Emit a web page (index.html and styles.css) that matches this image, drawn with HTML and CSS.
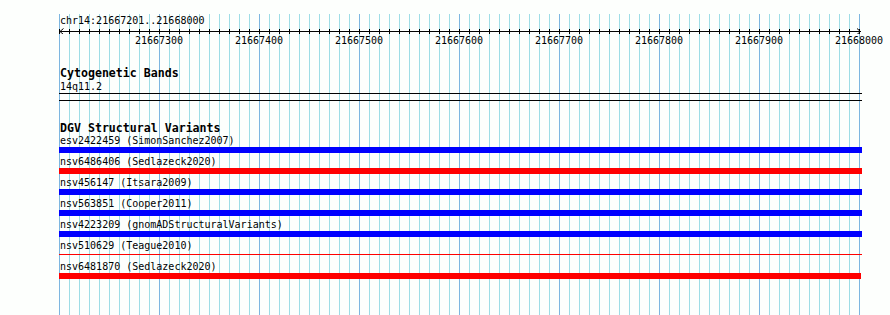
FILE: index.html
```
<!DOCTYPE html>
<html lang="en">
<head>
  <meta charset="UTF-8" />
  <title>chr14:21667201..21668000</title>
  <link rel="stylesheet" href="styles.css">
</head>
<body>
  <div class="panel">
    <div class="pos">chr14:21667201..21668000</div>

    <svg class="ruler" width="803" height="7" viewBox="0 0 803 7">
      <defs>
        <pattern id="tick" width="10" height="7" patternUnits="userSpaceOnUse">
          <rect x="0" y="0" width="1" height="7" fill="#000"/>
        </pattern>
      </defs>
      <rect x="0" y="2" width="801" height="5" fill="url(#tick)"/>
      <rect x="0" y="4" width="802" height="1" fill="#000"/>
      <path d="M4.5 1.5 L1 4.5 L4.5 7.5" fill="none" stroke="#000" stroke-width="1"/>
      <path d="M798 1.5 L801.5 4.5 L798 7.5" fill="none" stroke="#000" stroke-width="1"/>
    </svg>

    <div class="ticks">
      <span>21667300</span>
      <span>21667400</span>
      <span>21667500</span>
      <span>21667600</span>
      <span>21667700</span>
      <span>21667800</span>
      <span>21667900</span>
      <span>21668000</span>
    </div>

    <div class="track track-first">
      <div class="track-title">Cytogenetic Bands</div>
      <div class="label">14q11.2</div>
      <div class="band"></div>
    </div>

    <div class="track">
      <div class="track-title">DGV Structural Variants</div>

      <div class="label">esv2422459 (SimonSanchez2007)</div>
      <div class="bar gain"></div>

      <div class="label">nsv6486406 (Sedlazeck2020)</div>
      <div class="bar loss"></div>

      <div class="label">nsv456147 (Itsara2009)</div>
      <div class="bar gain"></div>

      <div class="label">nsv563851 (Cooper2011)</div>
      <div class="bar gain"></div>

      <div class="label">nsv4223209 (gnomADStructuralVariants)</div>
      <div class="bar gain"></div>

      <div class="label">nsv510629 (Teague2010)</div>
      <div class="bar loss thin"></div>

      <div class="label">nsv6481870 (Sedlazeck2020)</div>
      <div class="bar loss short"></div>
    </div>
  </div>
</body>
</html>
```

FILE: styles.css
```
html, body {
  margin: 0;
  padding: 0;
  overflow: hidden;
}
body {
  font-family: "DejaVu Sans Mono", "Liberation Mono", monospace;
  font-size: 10px;
  color: #000;
  background: #fdfffd;
}
/* grid: content box is 59px..860px, one tile per 10bp / 100bp */
.panel {
  width: 890px;
  height: 315px;
  padding: 14px 30px 0 59px;
  box-sizing: border-box;
  background-color: #fdfffd;
  background-image:
    linear-gradient(90deg, #7db6e0 1px, transparent 1px),
    linear-gradient(90deg, #9edde6 1px, transparent 1px);
  background-size: 100px 100%, 10px 100%;
  background-repeat: repeat-x;
  background-origin: content-box;
  background-clip: content-box;
}
.pos {
  line-height: 13px;
  height: 13px;
  padding-left: 1px;
  white-space: nowrap;
}
.ruler {
  display: block;
}
.ticks {
  display: flex;
  padding-left: 50px;
  line-height: 13px;
  height: 13px;
  white-space: nowrap;
}
.ticks span {
  flex: 0 0 100px;
  text-align: center;
}
.track {
  margin-top: 21px;
}
.track-first {
  margin-top: 20px;
}
.track-title {
  font-weight: bold;
  font-size: 11.6px;
  line-height: 13px;
  height: 13px;
  padding-left: 1px;
  white-space: nowrap;
}
.label {
  line-height: 12px;
  height: 12px;
  padding-left: 1px;
  white-space: nowrap;
}
.track-first .label {
  line-height: 13px;
  height: 13px;
}
.band {
  width: 803px;
  height: 6px;
  border-top: 1px solid #000;
  border-bottom: 1px solid #000;
}
.bar {
  width: 803px;
  height: 6px;
  margin-bottom: 3px;
}
.gain {
  background: #0000ff;
}
.loss {
  background: #ff0000;
}
.bar.thin {
  height: 1px;
  margin-top: 2px;
  margin-bottom: 6px;
}
.bar.short {
  width: 802px;
}
```
